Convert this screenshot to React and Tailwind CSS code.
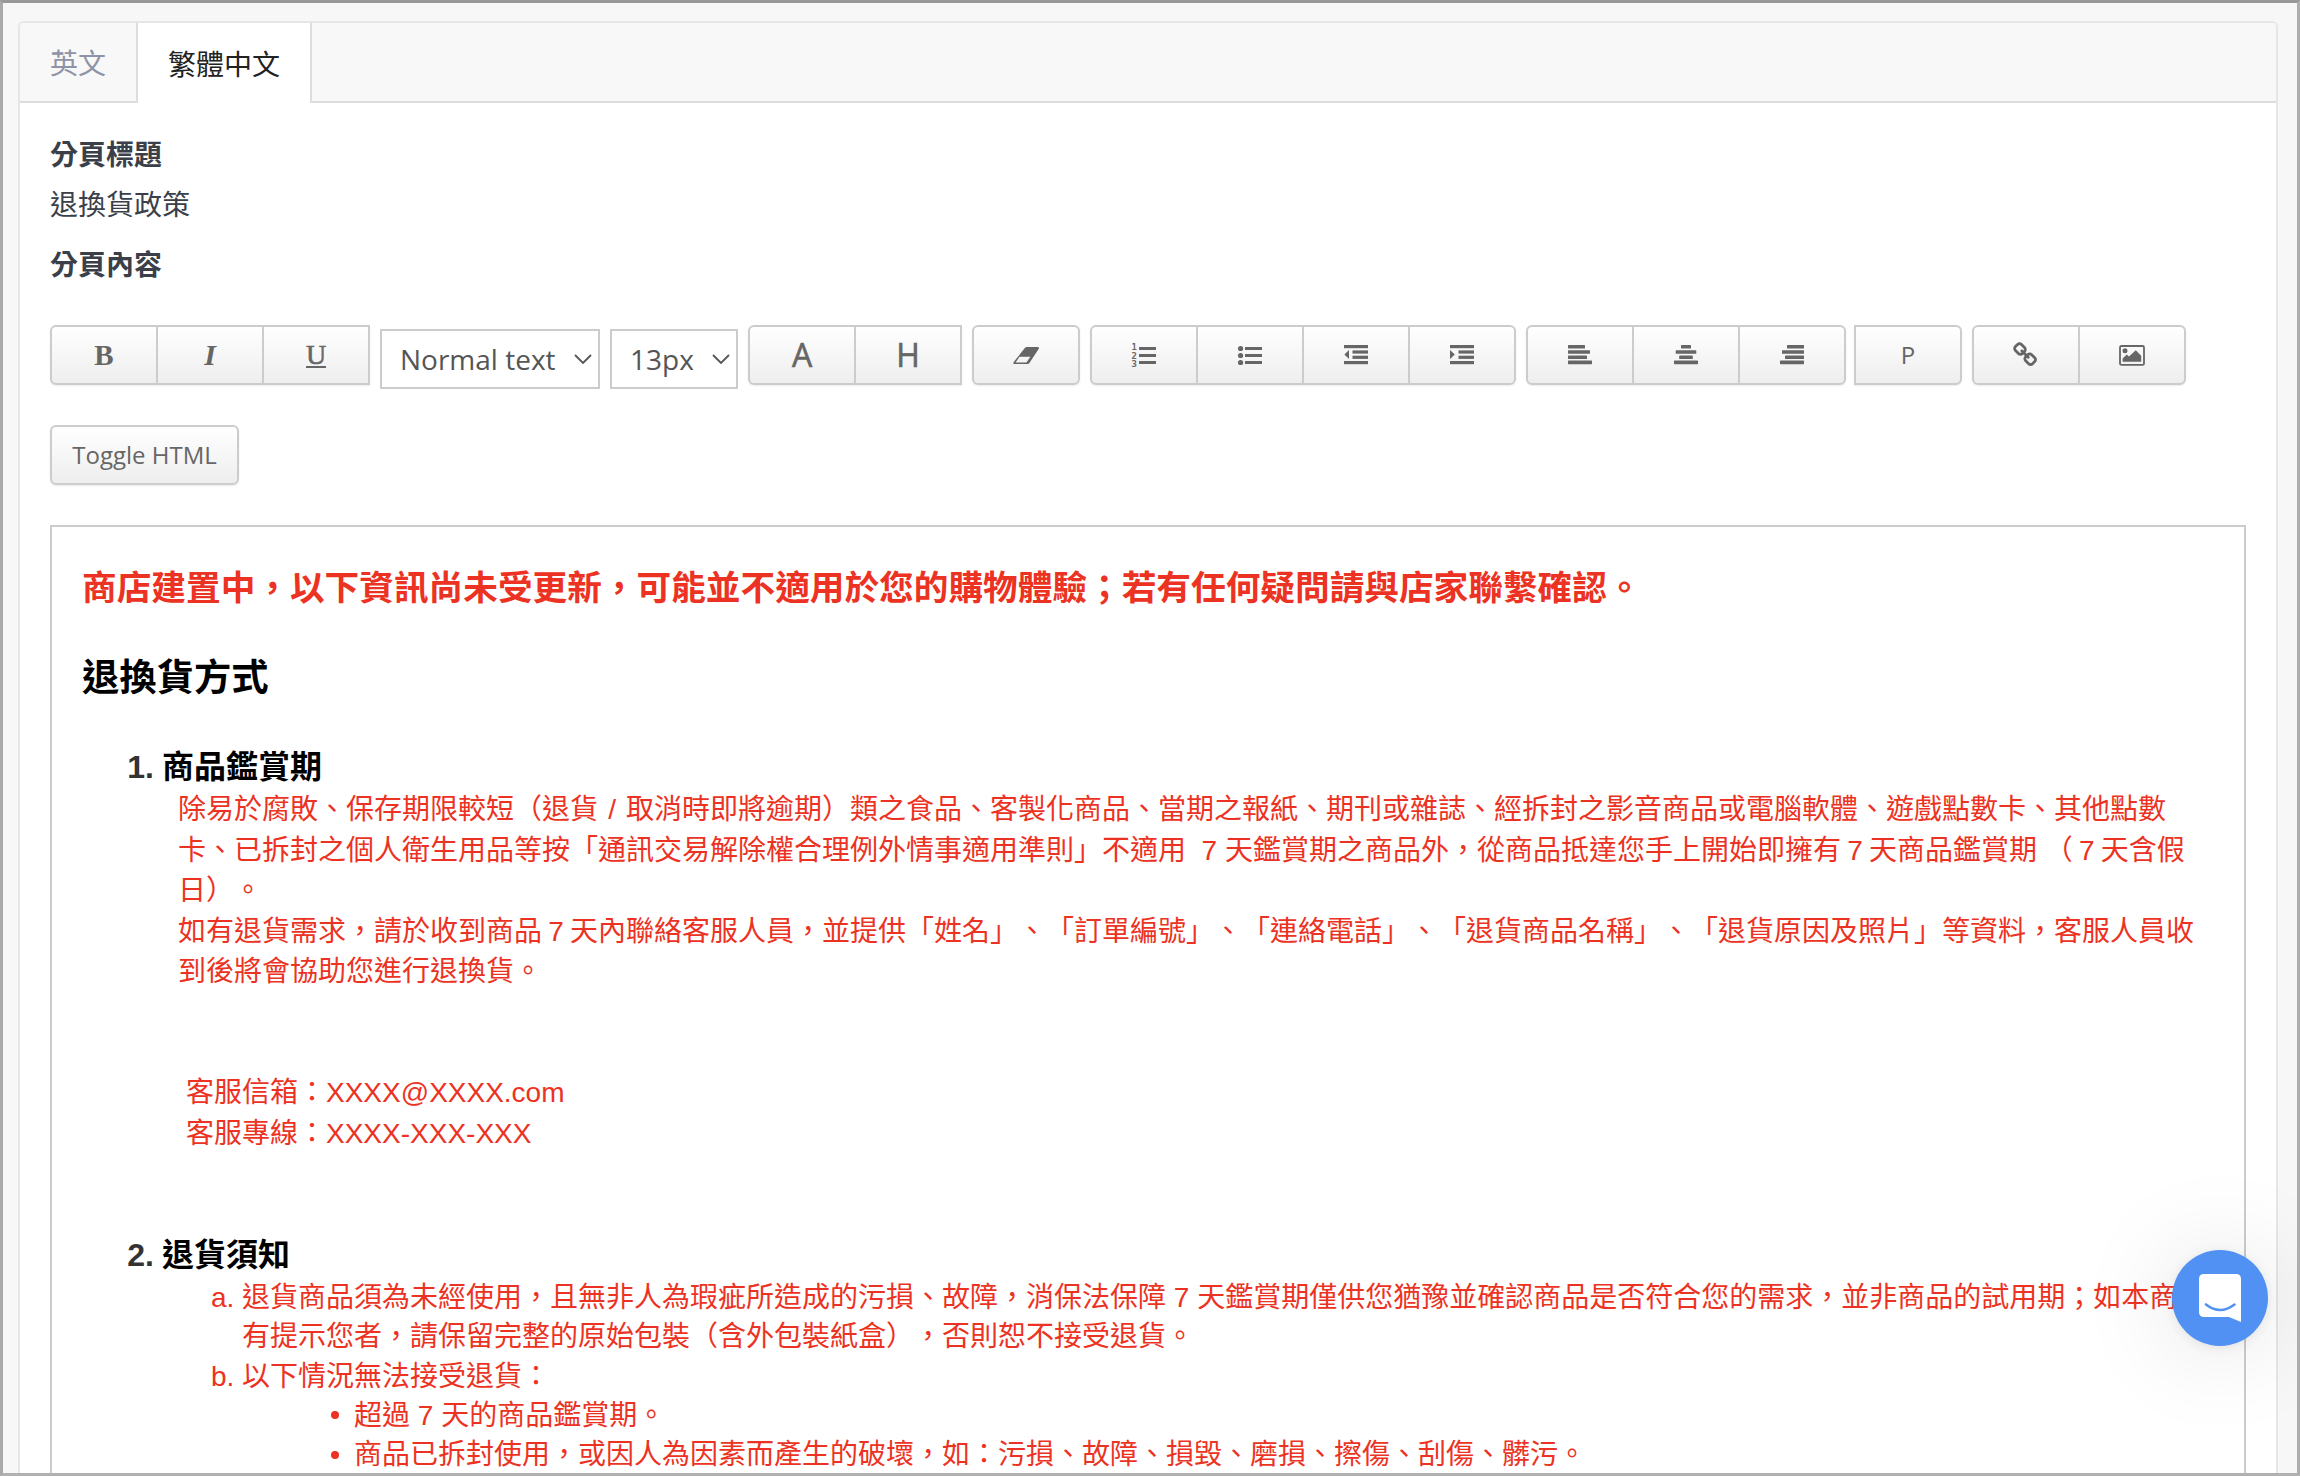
import React, { useState } from 'react';

const Icon = ({ children }) => (
  <svg width="28" height="28" viewBox="0 0 28 28" fill="currentColor">
    {children}
  </svg>
);

const EraserIcon = () => (
  <Icon>
    <path
      fillRule="evenodd"
      d="M14.8 6H25.6Q27.6 6 26.8 7.8L17.6 21.8Q16.8 23 15.4 23H2.6Q0.8 23 1.6 21.2L12.6 7.2Q13.6 6 14.8 6ZM7.6 15.8L3.6 21.4H14.4L18.4 15.8Z"
    />
  </Icon>
);

const OrderedListIcon = () => (
  <Icon>
    <g className="[font-family:'DejaVu_Sans_Mono',monospace] text-[9px] font-bold">
      <text x="1.5" y="9.4">1</text>
      <text x="1.5" y="17.6">2</text>
      <text x="1.5" y="26">3</text>
    </g>
    <rect x="9" y="6" width="17" height="3" />
    <rect x="9" y="13" width="17" height="3" />
    <rect x="9" y="20" width="17" height="3" />
  </Icon>
);

const BulletListIcon = () => (
  <Icon>
    <circle cx="4.6" cy="7.5" r="2.6" />
    <circle cx="4.6" cy="14.5" r="2.6" />
    <circle cx="4.6" cy="21.5" r="2.6" />
    <rect x="9" y="6" width="17" height="3" />
    <rect x="9" y="13" width="17" height="3" />
    <rect x="9" y="20" width="17" height="3" />
  </Icon>
);

const OutdentIcon = () => (
  <Icon>
    <rect x="2" y="4" width="24" height="3.2" />
    <rect x="10.5" y="9.4" width="15.5" height="3.2" />
    <rect x="10.5" y="14.7" width="15.5" height="3.2" />
    <rect x="2" y="20" width="24" height="3.2" />
    <path d="M7 9V18L2.4 13.5Z" />
  </Icon>
);

const IndentIcon = () => (
  <Icon>
    <rect x="2" y="4" width="24" height="3.2" />
    <rect x="10.5" y="9.4" width="15.5" height="3.2" />
    <rect x="10.5" y="14.7" width="15.5" height="3.2" />
    <rect x="2" y="20" width="24" height="3.2" />
    <path d="M2 9V18L6.8 13.5Z" />
  </Icon>
);

const AlignLeftIcon = () => (
  <Icon>
    <rect x="2" y="4" width="17" height="3.6" rx="0.6" />
    <rect x="2" y="9.2" width="22" height="3.6" rx="0.6" />
    <rect x="2" y="14.4" width="19" height="3.6" rx="0.6" />
    <rect x="2" y="19.6" width="24" height="3.6" rx="0.6" />
  </Icon>
);

const AlignCenterIcon = () => (
  <Icon>
    <rect x="9" y="4" width="10" height="3.6" rx="0.6" />
    <rect x="3.7" y="9.2" width="20.6" height="3.6" rx="0.6" />
    <rect x="7.2" y="14.4" width="13.6" height="3.6" rx="0.6" />
    <rect x="2" y="19.6" width="24" height="3.6" rx="0.6" />
  </Icon>
);

const AlignRightIcon = () => (
  <Icon>
    <rect x="9" y="4" width="17" height="3.6" rx="0.6" />
    <rect x="4" y="9.2" width="22" height="3.6" rx="0.6" />
    <rect x="7" y="14.4" width="19" height="3.6" rx="0.6" />
    <rect x="2" y="19.6" width="24" height="3.6" rx="0.6" />
  </Icon>
);

const LinkIcon = () => (
  <svg width="26" height="26" viewBox="0 0 1792 1792" fill="currentColor">
    <path d="M1456 1216q0-40-28-68l-208-208q-28-28-68-28-42 0-72 32 3 3 19 18.5t21.5 21.5 15 19 13 25.5 3.5 27.5q0 40-28 68t-68 28q-15 0-27.5-3.5t-25.5-13-19-15-21.5-21.5-18.5-19q-33 31-33 73 0 40 28 68l206 207q27 27 68 27 40 0 68-26l147-146q28-28 28-67zm-703-705q0-40-28-68l-206-207q-28-28-68-28-39 0-68 27l-147 146q-28 28-28 67 0 40 28 68l208 208q27 27 68 27 42 0 72-31-3-3-19-18.5t-21.5-21.5-15-19-13-25.5-3.5-27.5q0-40 28-68t68-28q15 0 27.5 3.5t25.5 13 19 15 21.5 21.5 18.5 19q33-31 33-73zm895 705q0 120-85 203l-147 146q-83 83-203 83-121 0-204-85l-206-207q-83-83-83-203 0-123 88-209l-88-88q-86 88-208 88-120 0-204-84l-208-208q-84-84-84-204t85-203l147-146q83-83 203-83 121 0 204 85l206 207q83 83 83 203 0 123-88 209l88 88q86-88 208-88 120 0 204 84l208 208q84 84 84 204z" />
  </svg>
);

const PictureIcon = () => (
  <Icon>
    <rect x="2" y="5" width="24" height="18.8" rx="1.4" fill="none" stroke="currentColor" strokeWidth="1.8" />
    <circle cx="7" cy="9.8" r="2.5" />
    <path d="M4.6 20.8V17.4L8.8 13.4L11 15.4L17.8 9.2L23.2 14.8V20.8Z" />
  </Icon>
);

const Chevron = () => (
  <svg width="18" height="11" viewBox="0 0 18 11" fill="none" stroke="#555" strokeWidth="1.8">
    <path d="M1 1L9 9L17 1" />
  </svg>
);

const ToolButton = ({ children, className = 'w-[106px]' }) => (
  <button
    type="button"
    className={`flex h-full shrink-0 items-center justify-center border-l-2 border-[#ccc] first:border-l-0 ${className}`}
  >
    {children}
  </button>
);

const ToolGroup = ({ children, className }) => (
  <div
    className={`flex h-[60px] shrink-0 overflow-hidden border-2 border-[#ccc] bg-linear-to-b from-white to-[#eee] shadow-[0_1px_2px_rgba(0,0,0,0.08)] ${className}`}
  >
    {children}
  </div>
);

const SelectBox = ({ children, className }) => (
  <div
    className={`mt-1 flex h-[60px] shrink-0 items-center justify-between border-2 border-[#ccc] bg-white text-[28px] text-[#555] ${className}`}
  >
    <span className="whitespace-nowrap">{children}</span>
    <Chevron />
  </div>
);

// Latin digits sit in their own fixed cell between the CJK characters
const Cell = ({ children }) => <span className="inline-block w-[28px] text-center">{children}</span>;

const Toolbar = () => (
  <div className="flex h-[60px] text-[#666]">
    <ToolGroup className="w-[320px] rounded-l-[6px]">
      <ToolButton className="w-[104px] [font-family:'Liberation_Serif',serif] text-[29px] font-bold">B</ToolButton>
      <ToolButton className="w-[106px] [font-family:'Liberation_Serif',serif] text-[30px] font-bold italic">I</ToolButton>
      <ToolButton className="w-[106px] [font-family:'Liberation_Serif',serif] text-[28px]">
        <span className="border-b-2 border-[#666] leading-[23px] [-webkit-text-stroke:0.6px_#666]">U</span>
      </ToolButton>
    </ToolGroup>
    <SelectBox className="ml-[10px] w-[220px] pr-[6px] pl-[18px]">Normal text</SelectBox>
    <SelectBox className="ml-[10px] w-[128px] pr-[6px] pl-[18px]">13px</SelectBox>
    <ToolGroup className="ml-[10px] w-[214px] rounded-l-[6px]">
      <ToolButton className="w-[104px] text-[32px] [-webkit-text-stroke:0.6px_#666]">A</ToolButton>
      <ToolButton className="w-[106px] text-[32px] [-webkit-text-stroke:0.6px_#666]">H</ToolButton>
    </ToolGroup>
    <ToolGroup className="ml-[10px] w-[108px] rounded-[6px]">
      <ToolButton className="w-[104px]"><EraserIcon /></ToolButton>
    </ToolGroup>
    <ToolGroup className="ml-[10px] w-[426px] rounded-[6px]">
      <ToolButton className="w-[104px]"><OrderedListIcon /></ToolButton>
      <ToolButton><BulletListIcon /></ToolButton>
      <ToolButton><OutdentIcon /></ToolButton>
      <ToolButton><IndentIcon /></ToolButton>
    </ToolGroup>
    <ToolGroup className="ml-[10px] w-[320px] rounded-[6px]">
      <ToolButton className="w-[104px]"><AlignLeftIcon /></ToolButton>
      <ToolButton><AlignCenterIcon /></ToolButton>
      <ToolButton><AlignRightIcon /></ToolButton>
    </ToolGroup>
    <ToolGroup className="ml-2 w-[108px] rounded-r-[6px]">
      <ToolButton className="w-[104px] text-[24px]">P</ToolButton>
    </ToolGroup>
    <ToolGroup className="ml-[10px] w-[214px] rounded-[6px]">
      <ToolButton className="w-[104px]"><LinkIcon /></ToolButton>
      <ToolButton><PictureIcon /></ToolButton>
    </ToolGroup>
  </div>
);

const Editor = () => (
  <div className="mt-10 h-[1100px] border-2 border-[#ccc] bg-white pt-[39px] pl-[30px] whitespace-nowrap [font-family:'Liberation_Sans','Noto_Sans_CJK_TC',sans-serif] text-[28px] text-[#ec3323] [text-spacing-trim:space-all]">
    <h1 className="text-[34.67px] leading-[44px] font-bold">
      商店建置中，以下資訊尚未受更新，可能並不適用於您的購物體驗；若有任何疑問請與店家聯繫確認。
    </h1>
    <h2 className="mt-[46px] text-[37.33px] leading-[44px] font-bold text-black">退換貨方式</h2>

    <h3 className="mt-[47px] flex text-[32px] leading-[40px] font-bold text-black">
      <span className="w-[80px] pr-[8px] text-right text-[#333]">1.</span>
      商品鑑賞期
    </h3>
    <div className="mt-[3px] pl-[96px] leading-[40.6px]">
      <p>
        除易於腐敗、保存期限較短（退貨<Cell>/</Cell>取消時即將逾期）類之食品、客製化商品、當期之報紙、期刊或雜誌、經拆封之影音商品或電腦軟體、遊戲點數卡、其他點數
      </p>
      <p>
        卡、已拆封之個人衛生用品等按「通訊交易解除權合理例外情事適用準則」不適用&nbsp; 7 天鑑賞期之商品外，從商品抵達您手上開始即擁有<Cell>7</Cell>天商品鑑賞期 （<Cell>7</Cell>天含假
      </p>
      <p>日）。</p>
      <p>
        如有退貨需求，請於收到商品<Cell>7</Cell>天內聯絡客服人員，並提供「姓名」、「訂單編號」、「連絡電話」、「退貨商品名稱」、「退貨原因及照片」等資料，客服人員收
      </p>
      <p>到後將會協助您進行退換貨。</p>
    </div>
    <div className="mt-20 pl-[104px] leading-[40.6px]">
      <p>客服信箱：XXXX@XXXX.com</p>
      <p>客服專線：XXXX-XXX-XXX</p>
    </div>

    <h3 className="mt-[81px] flex text-[32px] leading-[40px] font-bold text-black">
      <span className="w-[80px] pr-[8px] text-right text-[#333]">2.</span>
      退貨須知
    </h3>
    <div className="mt-[3px] leading-[39.2px]">
      <div className="flex pl-[129px]">
        <span className="w-[31px] shrink-0">a.</span>
        <p>
          退貨商品須為未經使用，且無非人為瑕疵所造成的污損、故障，消保法保障 7 天鑑賞期僅供您猶豫並確認商品是否符合您的需求，並非商品的試用期；如本商
          <br />
          有提示您者，請保留完整的原始包裝（含外包裝紙盒），否則恕不接受退貨。
        </p>
      </div>
      <div className="flex pl-[129px]">
        <span className="w-[31px] shrink-0">b.</span>
        <p>以下情況無法接受退貨：</p>
      </div>
      <div className="flex items-center pl-[249px]">
        <span className="mr-[15px] size-2 rounded-full bg-[#ec3323]" />
        <p>超過 7 天的商品鑑賞期。</p>
      </div>
      <div className="flex items-center pl-[249px]">
        <span className="mr-[15px] size-2 rounded-full bg-[#ec3323]" />
        <p>商品已拆封使用，或因人為因素而產生的破壞，如：污損、故障、損毀、磨損、擦傷、刮傷、髒污。</p>
      </div>
    </div>
  </div>
);

const ChatLauncher = () => (
  <button
    type="button"
    className="absolute top-[1247px] left-[2169px] flex size-24 items-center justify-center rounded-full bg-[#5091f3] shadow-[0_2px_12px_rgba(0,0,0,0.08),0_4px_100px_rgba(0,0,0,0.13)]"
  >
    <svg width="42" height="48" viewBox="0 0 42 48" fill="none">
      <path d="M5 0H37Q42 0 42 5V48L30 43H5Q0 43 0 38V5Q0 0 5 0Z" fill="#fff" />
      <path d="M7 30.5Q21 41.5 35.5 30.5" stroke="#5091f3" strokeWidth="2.6" strokeLinecap="round" />
    </svg>
  </button>
);

const App = () => {
  const [lang, setLang] = useState('zh');

  const tabClass = (id) =>
    lang === id
      ? 'bg-white text-[#222] border-r-2 border-[#ddd]'
      : 'text-[#8e93a5] border-r-2 border-b-2 border-[#ddd] pt-[2px]';

  return (
    <div className="relative h-[1476px] w-[2300px] overflow-hidden border-3 border-t-[#989898] border-r-[#adadad] border-b-[#b1b1b1] border-l-[#a9a9a9] bg-[#f7f7f7] [font-family:'Open_Sans','Noto_Sans_CJK_TC',sans-serif]">
      <div className="mt-[18px] mr-[19px] ml-[15px] overflow-hidden rounded-t-[6px] border-2 border-[#e6e6e6] bg-white">
        <div className="flex h-20 bg-[#f8f8f8] text-[28px]">
          <button type="button" onClick={() => setLang('en')} className={`w-[118px] pl-[30px] text-left ${tabClass('en')}`}>
            英文
          </button>
          <button type="button" onClick={() => setLang('zh')} className={`w-[174px] pt-[2px] pl-[30px] text-left ${tabClass('zh')}`}>
            繁體中文
          </button>
          <div className="flex-1 border-b-2 border-[#ddd]" />
        </div>

        <div className="px-[30px] pt-[26px] text-[28px] leading-[50px] text-[#3a3f4a]">
          <p className="font-bold">分頁標題</p>
          <p>退換貨政策</p>
          <p className="mt-[10px] mb-9 font-bold">分頁內容</p>
          <Toolbar />
          <ToolGroup className="mt-10 w-[189px] rounded-[6px]">
            <ToolButton className="w-full text-[24px] text-[#666]">Toggle HTML</ToolButton>
          </ToolGroup>
          <Editor />
        </div>
      </div>
      <ChatLauncher />
    </div>
  );
};

export default App;
